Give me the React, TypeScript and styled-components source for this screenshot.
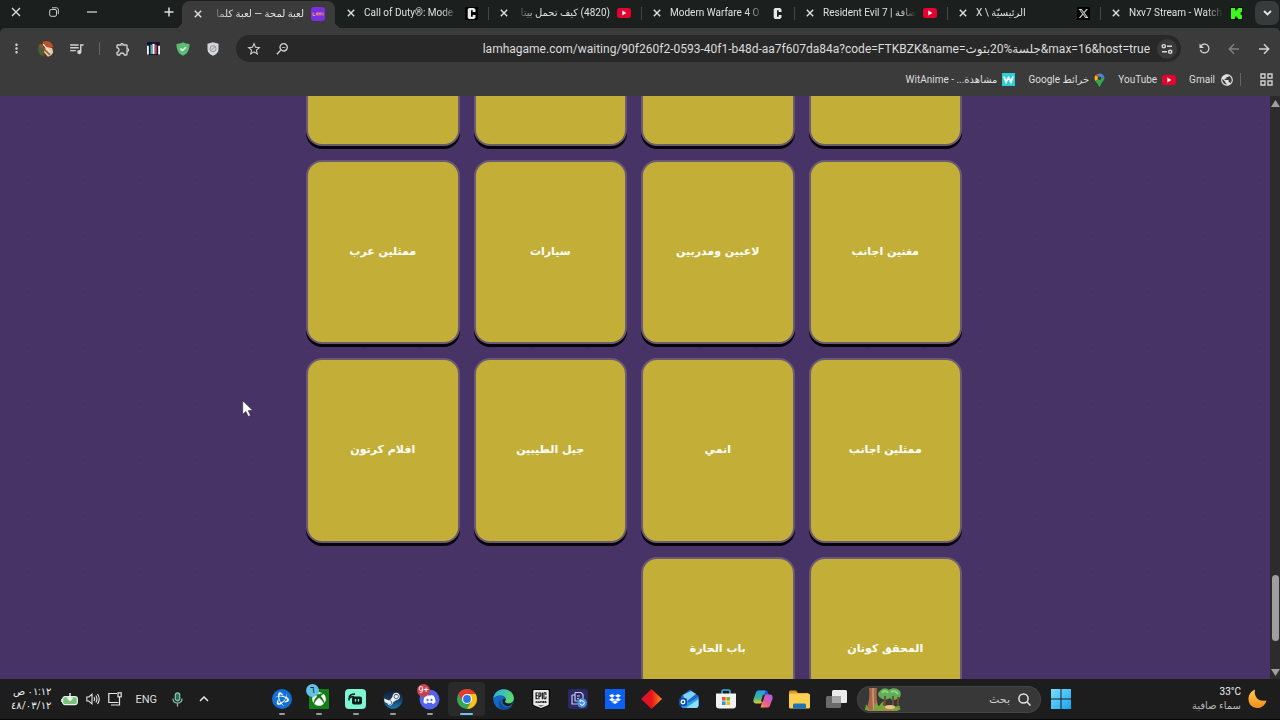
import React from 'react';
import styled, { createGlobalStyle } from 'styled-components';
import { MdStarBorder, MdRefresh, MdMoreVert, MdQueueMusic, MdZoomOut, MdPublic, MdOutlineExtension } from 'react-icons/md';
import { FaDropbox, FaDiscord, FaSteam, FaXbox } from 'react-icons/fa';
import { FaXTwitter } from 'react-icons/fa6';
import { SiBattledotnet, SiEpicgames } from 'react-icons/si';

const uiFont = 'Roboto, "DejaVu Sans", sans-serif';

const GlobalStyle = createGlobalStyle`
  * { box-sizing: border-box; }
  body { margin: 0; background: #1d1d1d; font-family: ${uiFont}; }
  button, input { font: inherit; color: inherit; }
  button { border: 0; padding: 0; background: none; cursor: default; }
  a { color: inherit; text-decoration: none; }
  svg { display: block; flex: none; }
`;

const Desktop = styled.div`
  position: relative;
  display: flex;
  flex-direction: column;
  height: 100vh;
  overflow: hidden;
  background: #1b201f;
  color: #dedede;
  font-size: 11px;
`;

/* ---------- tab strip ---------- */

const TabStrip = styled.header`
  display: flex;
  align-items: stretch;
  height: 28px;
  flex: none;
  background: #1b201f;
  padding: 0 1px 0 7px;
`;

const TabMenu = styled.button`
  display: grid;
  place-items: center;
  width: 24px;
  height: 24px;
  margin: 1px 0 0 2px;
  border-radius: 7px;
  background: #383b3b;
`;

const Tab = styled.div<{ $active?: boolean }>`
  position: relative;
  display: flex;
  align-items: center;
  gap: 7px;
  flex: 0 1 153px;
  min-width: 0;
  padding: 0 10px 2px;
  background: ${(p) => (p.$active ? '#3b3b3b' : 'transparent')};
  border-radius: 8px 8px 0 0;
  margin-top: ${(p) => (p.$active ? '1px' : '0')};

  &::before, &::after {
    content: '';
    position: absolute;
    bottom: 0;
    width: 7px;
    height: 7px;
    display: ${(p) => (p.$active ? 'block' : 'none')};
  }
  &::before { right: -7px; background: radial-gradient(circle at 100% 0, transparent 7px, #3b3b3b 7px); }
  &::after { left: -7px; background: radial-gradient(circle at 0 0, transparent 7px, #3b3b3b 7px); }
`;

const TabDivider = styled.span`
  align-self: center;
  width: 1px;
  height: 13px;
  margin: 0 -1px 2px 0;
  background: #454848;
`;

const TabTitle = styled.span`
  flex: 1;
  min-width: 0;
  overflow: hidden;
  white-space: nowrap;
  line-height: 18px;
  font-size: 10px;
  color: #dfe1e1;
  mask-image: linear-gradient(to right, #000 82%, transparent);
  &[dir='rtl'] { mask-image: linear-gradient(to left, #000 82%, transparent); }
`;

const TabClose = styled.button`
  display: grid;
  place-items: center;
  width: 12px;
  height: 12px;
`;

const WindowControls = styled.div`
  display: flex;
  align-items: center;
  margin-inline-start: auto;
  padding-bottom: 4px;
`;

const WindowButton = styled.button`
  display: grid;
  place-items: center;
  width: 38px;
  height: 24px;
  &:last-child { width: 18px; margin-inline-start: 10px; }
`;

const NewTab = styled.button`
  display: grid;
  place-items: center;
  width: 24px;
  height: 24px;
  margin-inline-start: 1px;
`;

/* ---------- toolbar ---------- */

const Toolbar = styled.div`
  display: flex;
  align-items: center;
  height: 37px;
  flex: none;
  padding: 4px 1px 0;
  border-radius: 5px 5px 0 0;
  background: #3b3b3b;
`;

const ToolButton = styled.button<{ $dim?: boolean }>`
  display: grid;
  place-items: center;
  width: 30px;
  height: 26px;
  color: ${(p) => (p.$dim ? '#808080' : '#d2d2d2')};
`;

const AddressBar = styled.div`
  display: flex;
  align-items: center;
  flex: 1;
  min-width: 0;
  height: 27px;
  margin: 0 8px;
  padding: 0 4px;
  border-radius: 14px;
  background: #282828;
`;

const SiteInfo = styled.button`
  display: grid;
  place-items: center;
  width: 20px;
  height: 20px;
  border-radius: 50%;
  background: #3a3a3a;
`;

const Address = styled.input`
  flex: 1;
  min-width: 0;
  margin: 0 5px;
  border: 0;
  outline: 0;
  background: transparent;
  color: #dcdcdc;
  font-size: 12px;
  text-align: right;
`;

const BarButton = styled.button`
  display: grid;
  place-items: center;
  width: 28px;
  height: 20px;
  color: #d2d2d2;
`;

const Divider = styled.span<{ $wide?: boolean }>`
  width: 1px;
  height: 13px;
  margin: ${(p) => (p.$wide ? '0 19px 0 6px' : '0 8px')};
  background: #666;
`;

const Bookmarks = styled.nav`
  display: flex;
  align-items: center;
  height: 31px;
  flex: none;
  padding: 0 7px 2px;
  background: #3b3b3b;
`;

const Bookmark = styled.a`
  display: flex;
  align-items: center;
  gap: 5px;
  margin-inline-end: 13px;
  font-size: 10px;
  line-height: 18px;
  white-space: nowrap;
`;

/* ---------- page ---------- */

const Viewport = styled.div`
  display: flex;
  flex: 1;
  min-height: 0;
`;

const Page = styled.main`
  flex: 1;
  min-width: 0;
  overflow: hidden;
  padding: 0 16px 0 14px;
  background: radial-gradient(circle, #432e5f 1px, transparent 1px) 0 0 / 56px 56px, #483366;
`;

const CategoryGrid = styled.div`
  display: grid;
  grid-template-columns: repeat(4, 1fr);
  gap: 14px;
  max-width: 656px;
  margin: -134px auto 0;
`;

const Category = styled.button`
  aspect-ratio: 5 / 6;
  border: 2px solid #6c5a75;
  border-radius: 16px;
  background: #c3af37;
  box-shadow: 0 3px 0 #050208;
  color: #fff;
  font-family: "DejaVu Sans", sans-serif;
  font-weight: 700;
  font-size: 11px;
  line-height: 18px;
`;

const Scrollbar = styled.div`
  display: flex;
  flex-direction: column;
  align-items: center;
  width: 10px;
  padding: 4px 0 3px 1px;
  background: #2c2c2c;
`;

const Thumb = styled.div`
  width: 7px;
  height: 66px;
  margin: auto 0 28px;
  border-radius: 4px;
  background: #9f9f9f;
`;

const Pointer = styled.svg`
  position: absolute;
  left: 242px;
  top: 400px;
`;

/* ---------- taskbar ---------- */

const Taskbar = styled.footer`
  display: flex;
  align-items: center;
  height: 41px;
  flex: none;
  padding: 0 13px 0 11px;
  background: #1d1d1d;
  border-bottom: 1px solid #080808;
`;

const Weather = styled.button`
  display: flex;
  align-items: center;
  gap: 7px;
  width: 190px;
  text-align: right;
  line-height: 14px;
`;

const WeatherText = styled.span`
  display: grid;
  font-size: 10px;
  color: #b8b8b8;
  & > b { font-weight: 400; color: #f2f2f2; }
`;

const StartButton = styled.button`
  display: grid;
  place-items: center;
  width: 32px;
  height: 32px;
`;

const Search = styled.label`
  display: flex;
  align-items: center;
  gap: 8px;
  width: 184px;
  height: 27px;
  margin-inline: 4px 2px;
  padding: 0 10px 0 8px;
  border-radius: 14px;
  background: #383838;
  box-shadow: inset 0 0 0 1px #434343;
`;

const SearchInput = styled.input`
  flex: 1;
  min-width: 0;
  padding: 0;
  border: 0;
  outline: 0;
  background: transparent;
  font-size: 11px;
  &::placeholder { color: #cfcfcf; opacity: 1; }
`;

const Apps = styled.div`
  display: flex;
`;

const AppButton = styled.button<{ $state?: 'open' | 'focus' }>`
  position: relative;
  display: grid;
  place-items: center;
  width: 37px;
  height: 34px;
  border-radius: 4px;
  background: ${(p) => (p.$state === 'focus' ? '#2a2a2a' : 'transparent')};
  &::after {
    content: '';
    position: absolute;
    bottom: 1px;
    width: ${(p) => (p.$state === 'focus' ? 13 : 6)}px;
    height: 2px;
    border-radius: 2px;
    background: ${(p) => (p.$state === 'focus' ? '#6cc5e4' : '#9a9a9a')};
    display: ${(p) => (p.$state ? 'block' : 'none')};
  }
`;

const Badge = styled.span<{ $red?: boolean }>`
  position: absolute;
  top: 2px;
  left: 6px;
  min-width: 13px;
  height: 13px;
  border-radius: 7px;
  background: ${(p) => (p.$red ? '#c8414b' : '#62c3e6')};
  color: ${(p) => (p.$red ? '#fff' : '#123')};
  font-size: 9px;
  line-height: 13px;
  text-align: center;
`;

const Tray = styled.div`
  display: flex;
  align-items: center;
  gap: 8px;
  margin-inline-start: auto;
`;

const TrayButton = styled.button<{ $wide?: boolean }>`
  display: grid;
  place-items: center;
  min-width: 14px;
  height: 28px;
  margin-inline: ${(p) => (p.$wide ? 5 : 0)}px;
  font-size: 11px;
`;

const Clock = styled.time`
  display: grid;
  margin-inline-start: 2px;
  text-align: right;
  font-size: 10px;
  line-height: 14px;
  color: #efefef;
`;

/* ---------- drawings ---------- */

const Cross = ({ size = 8, width = 1.4 }: { size?: number; width?: number }) => (
  <svg width={size} height={size} viewBox="0 0 8 8" fill="none" stroke="#e0e0e0" strokeWidth={width}><path d="M.8.8l6.4 6.4M7.2.8L.8 7.2" /></svg>
);

const YouTubeLogo = () => (
  <svg width="14" height="14" viewBox="0 0 14 14"><rect y="2" width="14" height="10" rx="2.5" fill="#e5002f" /><path d="M5.3 4.6v4.8L9.4 7z" fill="#fff" /></svg>
);

const CLogo = ({ boxed }: { boxed?: boolean }) => (
  <svg width="13" height="13" viewBox="0 0 13 13">
    {boxed && <rect width="13" height="13" fill="#050505" />}
    <path d="M4 1h5l1.500 1.500V5H7.700V3.300H6v6.400h1.700V8h2.800v2.500L9 12H4L2.700 10.700V2.300z" fill="#e8e8e8" />
  </svg>
);

const KickLogo = () => (
  <svg width="13" height="13" viewBox="0 0 13 13"><rect width="13" height="13" fill="#0a1508" /><path d="M1 1h4v2.500h1.500V2.300H8V1h4v4h-1.300v1.500H9.500h1.200V8H12v4H8v-1.300H6.500V9.500H5V12H1z" fill="#3df61d" /></svg>
);

const LamhaLogo = () => (
  <svg width="14" height="14" viewBox="0 0 14 14"><rect width="14" height="14" rx="3" fill="#7a2fe0" /><path d="M2 8.500V5.500M2 8.500h2M5 8.500l1-3 1 3M8 8.500v-3l1 1.500 1-1.500v3M12 5.500v3" stroke="#f09a70" fill="none" /></svg>
);

const XLogo = () => (
  <svg width="13" height="13" viewBox="0 0 13 13"><rect width="13" height="13" fill="#000" /><FaXTwitter x="1" y="1" size={11} color="#ddd" /></svg>
);

const Tune = () => (
  <svg width="12" height="12" viewBox="0 0 12 12" fill="none" stroke="#dcdcdc" strokeWidth="1.400"><circle cx="2.800" cy="3.200" r="1.600" /><path d="M6 3.200h5M1 8.800h5" /><circle cx="9.200" cy="8.800" r="1.600" /></svg>
);

const Arrow = ({ back }: { back?: boolean }) => (
  <svg width="12" height="12" viewBox="0 0 12 12" fill="none" stroke="currentColor" strokeWidth="1.500"><path d={back ? 'M11 6H1.500M6 1.200L1.300 6 6 10.800' : 'M1 6h9.500M6 1.200L10.700 6 6 10.800'} /></svg>
);

const GreenShield = () => (
  <svg width="14" height="14" viewBox="0 0 14 14"><path d="M7 .3c2 1.200 4 1.700 6.500 1.700 0 5.500-1.500 9.300-6.500 11.700C2 11.300.5 7.500.5 2 3 2 5 1.500 7 .3z" fill="#5cbd74" /><path d="M4.500 6.500l2 2 3.300-3.300" fill="none" stroke="#fff" strokeWidth="1.300" /></svg>
);

const GreyShield = () => (
  <svg width="12" height="14" viewBox="0 0 12 14"><path d="M6 .3l5.500 1.500v5.700c0 3-2.500 5-5.500 6.200C3 12.500.5 10.500.5 7.500V1.800z" fill="#d3d7da" /><circle cx="6" cy="6.700" r="3" fill="none" stroke="#8c9296" /><path d="M4.300 8.300l3.400-3.400" stroke="#8c9296" /></svg>
);

const StripedLogo = () => (
  <svg width="13" height="13" viewBox="0 0 14 14"><rect width="14" height="14" rx="1.500" fill="#11142a" /><path d="M1 4v9.500M13 4v9.500" stroke="#f2f2f2" strokeWidth="2" /><path d="M4.500 3v10" stroke="#39c5c8" strokeWidth="1.600" /><path d="M7 2v11" stroke="#f4f4f4" strokeWidth="2.400" /><path d="M9.600 3v10" stroke="#e0455a" strokeWidth="1.600" /></svg>
);

const Avatar = () => (
  <svg width="16" height="16" viewBox="0 0 16 16"><clipPath id="face"><circle cx="8" cy="8" r="8" /></clipPath><g clipPath="url(#face)"><rect width="16" height="16" fill="#6b3421" /><path d="M0 2l5 2 3 8-5 4H0z" fill="#476034" /><path d="M4 0h9l2 6-5 1-4-4z" fill="#b9522b" /><path d="M8 6l6 1 2 7-6 2-4-5z" fill="#d9cfae" /><path d="M2 4l10 10" stroke="#b5472c" strokeWidth="1.600" /><path d="M5 3l7 8" stroke="#f0e6cd" strokeWidth="1.300" /></g></svg>
);

const MapsPin = () => (
  <svg width="11" height="14" viewBox="0 0 11 14"><path d="M5.500.5A5 5 0 0 0 1.600 2.300L5.500 5.500z" fill="#ea4335" /><path d="M5.500.5a5 5 0 0 1 4.800 3.600L5.500 5.500 4 2z" fill="#4285f4" /><path d="M1.600 2.300C.2 4 .3 6 1.300 8L5.500 5.500z" fill="#fbbc04" /><path d="M10.300 4.100c.7 3.400-3 5-4.100 9.100-.3.700-1 .7-1.300 0C4.300 11 2.300 9.700 1.300 8l4.200-2.500z" fill="#34a853" /><circle cx="5.500" cy="5.300" r="1.700" fill="#3b3b3b" /></svg>
);

const WitLogo = () => (
  <svg width="13" height="13" viewBox="0 0 13 13"><rect width="13" height="13" fill="#2ccfd3" /><path d="M2 3.500l2 5.500 2.500-4.500L9 9l2-5.500" fill="none" stroke="#fff" strokeWidth="1.800" /></svg>
);

const GridIcon = () => (
  <svg width="13" height="13" viewBox="0 0 13 13" fill="none" stroke="#d0d0d0" strokeWidth="1.400"><path d="M1 1h4v4H1zM8 1h4v4H8zM1 8h4v4H1zM8 8h4v4H8z" /></svg>
);

const Moon = () => (
  <svg width="19" height="20" viewBox="0 0 19 20"><defs><linearGradient id="moon" x1="0" y1="0" x2="0" y2="1"><stop offset="0" stopColor="#ffcc4d" /><stop offset="1" stopColor="#f08c1c" /></linearGradient></defs><path d="M7 .5C5.500 7 10 13.500 18.500 11.500 17 16.500 13 19.500 8.500 19 3.500 18.400.2 14.500.5 9.500.7 5.500 3.300 2 7 .5z" fill="url(#moon)" /></svg>
);

const Windows = () => (
  <svg width="20" height="20" viewBox="0 0 20 20"><defs><linearGradient id="win" x1="0" y1="0" x2="1" y2="1"><stop offset="0" stopColor="#7edcff" /><stop offset="1" stopColor="#16a4f0" /></linearGradient></defs><path d="M0 0h9.500v9.500H0zM10.500 0H20v9.500h-9.500zM0 10.500h9.500V20H0zM10.500 10.500H20V20h-9.500z" fill="url(#win)" /></svg>
);

const Forest = () => (
  <svg width="36" height="23" viewBox="0 0 36 23">
    <path d="M0 21c6-4 28-5 36 0l-4 2H3z" fill="#a58a4a" />
    <path d="M15 3c3-4 7-3 9-1 3-3 9-2 11 1 2 4 0 8-3 8-3 2-6 1-7-1-3 2-7 2-9 0-3-1-4-5-1-7z" fill="#5fae5a" />
    <path d="M17 5c2-3 5-2 6 0M26 4c3-2 6 0 7 2" stroke="#93d47c" strokeWidth="2" fill="none" />
    <path d="M20 8v10M28 8v10M33 9v9" stroke="#7c4a2b" strokeWidth="1.800" />
    <path d="M4 0h8c-1 8 0 15 2 22H1C4 15 5 8 4 0z" fill="#a8684a" />
    <path d="M8 0c0 8 0 15 1 22" stroke="#d09a78" strokeWidth="1.500" fill="none" />
    <path d="M9 22c0-4 1-6 3-8 0 3 1 4 2 5 1-3 3-5 5-6-1 3-1 5 0 8zM0 22l1-6 3 6zM26 22c1-3 5-4 9-4l-1 4z" fill="#6aae35" />
    <ellipse cx="25" cy="19" rx="5" ry="2" fill="#e6c58b" />
  </svg>
);

const TaskView = () => (
  <svg width="21" height="20" viewBox="0 0 21 20"><rect x="6" y="1" width="15" height="13" rx="1.500" fill="#ececec" /><rect y="7" width="15" height="12" rx="1.500" fill="#6a6a6a" /><path d="M6 7h9v7H6z" fill="#a5a5a5" /></svg>
);

const Folder = () => (
  <svg width="21" height="19" viewBox="0 0 21 19"><path d="M0 2Q0 .5 1.500.5H7l2 2.500h10v6H0z" fill="#d99a20" /><rect y="3.500" width="21" height="15" rx="1.500" fill="#fbd050" /><path d="M4 18.500V15q0-1.500 1.500-1.500h10Q17 13.500 17 15v3.500z" fill="#1e74b8" /></svg>
);

const Copilot = () => (
  <svg width="20" height="18" viewBox="0 0 20 18"><defs><linearGradient id="cpA" x1="0" y1="0" x2="0" y2="1"><stop offset="0" stopColor="#1f9df0" /><stop offset=".6" stopColor="#43b98a" /><stop offset="1" stopColor="#e9cb35" /></linearGradient><linearGradient id="cpB" x1="1" y1="0" x2="0" y2="1"><stop offset="0" stopColor="#a65ff0" /><stop offset=".6" stopColor="#ee5a93" /><stop offset="1" stopColor="#f59a4a" /></linearGradient></defs><path d="M5 .5h8.500q1 0 1.500 2l.8 2.500H12z" fill="#2556c8" /><path d="M5 .5h7.500L9 12q-.5 1.500-2 1.500H3C.5 13.500 0 11 .6 9L3 2.500Q3.600.5 5 .5z" fill="url(#cpA)" /><path d="M15 17.500H7.500L11 6q.5-1.500 2-1.500h4c2.500 0 3 2.500 2.400 4.500L17 15.500q-.6 2-2 2z" fill="url(#cpB)" /><path d="M10.800 5L9 11.500" stroke="#1d1d1d" strokeWidth="1.800" /></svg>
);

const Store = () => (
  <svg width="20" height="20" viewBox="0 0 20 20"><path d="M6 5V2.500Q6 1 7.500 1h5Q14 1 14 2.500V5" fill="none" stroke="#3cb1dd" strokeWidth="1.600" /><path d="M0 4.500h20v12q0 3-3 3H3q-3 0-3-3z" fill="#f3f3f3" /><path d="M6 8h3.600v3.600H6z" fill="#f05325" /><path d="M10.400 8H14v3.600h-3.600z" fill="#7fba22" /><path d="M6 12.400h3.600V16H6z" fill="#19a2e6" /><path d="M10.400 12.400H14V16h-3.600z" fill="#fdb813" /></svg>
);

const Outlook = () => (
  <svg width="20" height="20" viewBox="0 0 20 20"><path d="M2 7l9-6.500L19.500 7v9q0 3-3 3H5q-3 0-3-3z" fill="#1a66c9" /><path d="M4 6l8-4 5 3-10 8z" fill="#7fd4f7" /><path d="M2 9l8 4.500 9.500-6V16q0 3-3 3H5q-3 0-3-3z" fill="#2f9be8" /><path d="M7 18.800l12.500-8.500V16q0 3-3 3z" fill="#8be0fa" /><rect y="9" width="8" height="8" rx="2" fill="#0f4fae" /><circle cx="4" cy="13" r="1.800" fill="none" stroke="#fff" strokeWidth="1.300" /></svg>
);

const Diamond = () => (
  <svg width="21" height="20" viewBox="0 0 21 20"><defs><linearGradient id="dia"><stop offset="0" stopColor="#d80f3c" /><stop offset=".5" stopColor="#e8141a" /><stop offset="1" stopColor="#ff8b1c" /></linearGradient></defs><path d="M10.500 0L21 10 10.500 20 0 10z" fill="url(#dia)" /></svg>
);

const DropboxTile = () => (
  <svg width="20" height="20" viewBox="0 0 20 20"><rect width="20" height="20" fill="#0d61f2" /><FaDropbox x="4" y="4" size={12} color="#fff" /></svg>
);

const NotesTile = () => (
  <svg width="20" height="20" viewBox="0 0 20 20"><rect width="20" height="20" rx="3" fill="#2b2864" /><path d="M4 6h3M4 6v9h6M7 3.500h6l2 2V10M7 3.500V12h3M9 7h3M9 9.500h2" fill="none" stroke="#c6c8ee" strokeWidth="1.200" /><circle cx="14" cy="14" r="4.800" fill="#4592dc" /><path d="M12 14.500a2.200 2.200 0 1 0 2-2.700h-2M13 10.500l-1.300 1.300L13 13" fill="none" stroke="#fff" /></svg>
);

const EpicTile = () => (
  <svg width="18" height="20" viewBox="0 0 18 20"><path d="M0 1.500Q0 0 1.500 0h15Q18 0 18 1.500V16.500L9 20 0 16.500z" fill="#050505" /><SiEpicgames x="0" y="1" size={18} color="#e8e8e8" /></svg>
);

const Edge = () => (
  <svg width="21" height="21" viewBox="0 0 21 21"><defs><linearGradient id="edA" x1="0" y1="0" x2="1" y2=".5"><stop offset="0" stopColor="#2aa9e8" /><stop offset="1" stopColor="#5bdc6a" /></linearGradient></defs><circle cx="10.500" cy="10.500" r="10.300" fill="#1667c0" /><path d="M.3 9.500C1 4 5.300.2 10.500.2c6 0 10.300 4.300 10.300 9 0 3.300-2.500 5.300-5.500 5.300-2.300 0-3.600-1-3.300-2 .8-1.200 1-2 .8-3C12.200 6.800 9.500 6 7 6.200 4 6.500 1.500 7.500.3 9.500z" fill="url(#edA)" /><path d="M8 10c-1.500 4 1 8.500 6 8.500 2 0 3.500-.5 5-1.500-2 3-6 4.300-9.500 3.600C5 19.500 4.500 13.500 8 10z" fill="#0f4a94" /><path d="M12.700 9.500c.2 1-.7 2-.7 3 0 1.200 1.500 2 3.300 2 2 0 3.700-.7 4.800-2.300-.5 3-2.800 5-5.600 5C10.500 17 8.500 13 10 10z" fill="#1d1d1d" /></svg>
);

const Chrome = () => (
  <svg width="20" height="20" viewBox="0 0 20 20"><circle cx="10" cy="10" r="10" fill="#34a853" /><path d="M1.340 5A10 10 0 0 1 18.660 5H10L5.670 12.500z" fill="#e33b2e" /><path d="M18.660 5A10 10 0 0 1 10 20l4.330-7.500L10 5z" fill="#fbc116" /><circle cx="10" cy="10" r="5" fill="#fff" /><circle cx="10" cy="10" r="3.900" fill="#2a74e6" /></svg>
);

const DiscordTile = () => (
  <svg width="21" height="21" viewBox="0 0 21 21"><circle cx="10.500" cy="10.500" r="10" fill="#5562ea" /><FaDiscord x="4" y="4" size={13} color="#fff" /></svg>
);

const SteamTile = () => (
  <svg width="20" height="20" viewBox="0 0 20 20"><defs><linearGradient id="stm" x1="0" y1="0" x2="0" y2="1"><stop offset="0" stopColor="#141a26" /><stop offset=".5" stopColor="#153a63" /><stop offset="1" stopColor="#1a78b4" /></linearGradient></defs><circle cx="10" cy="10" r="9" fill="#eee" /><FaSteam size={20} fill="url(#stm)" /></svg>
);

const StreamTile = () => (
  <svg width="21" height="20" viewBox="0 0 21 20"><rect width="21" height="20" rx="4" fill="#80f5d2" /><path d="M4 8.500Q5 5 10 5M4 11.500V9.500Q6 7.500 9 7.500" fill="none" stroke="#0b1d19" strokeWidth="1.500" /><rect x="7" y="7.500" width="10" height="8" rx="2" fill="#0b1d19" /><path d="M10.500 10v2.500M13.500 10v2.500" stroke="#80f5d2" strokeWidth="1.300" /></svg>
);

const XboxTile = () => (
  <svg width="20" height="20" viewBox="0 0 20 20"><rect width="20" height="20" rx="1" fill="#128012" /><FaXbox x="3" y="3" size={14} color="#fff" /></svg>
);

const BattleTile = () => (
  <svg width="20" height="20" viewBox="0 0 20 20"><circle cx="10" cy="10" r="10" fill="#1270d8" /><SiBattledotnet x="3" y="3" size={14} color="#fff" /></svg>
);

const Mic = () => (
  <svg width="11" height="15" viewBox="0 0 11 15" fill="none" stroke="#86cbb8" strokeWidth="1.200"><rect x="3.300" y=".8" width="4.400" height="8" rx="2.200" fill="#2f6a5d" /><path d="M1 6.500c0 6 9 6 9 0M5.500 11v3.500" /></svg>
);

const Monitor = () => (
  <svg width="14" height="14" viewBox="0 0 14 14" fill="none" stroke="#e6e6e6" strokeWidth="1.200"><path d="M9 1.500H.8v9h9.500M3 13h8.500V5" /><rect x="10" y=".8" width="3.200" height="4" /></svg>
);

const Speaker = () => (
  <svg width="14" height="12" viewBox="0 0 14 12" fill="none" stroke="#e6e6e6" strokeWidth="1.100"><path d="M.8 4v4h2L6 10.800V1.200L2.800 4zM8 4q1.300 2 0 4M9.800 2.500q2.400 3.500 0 7M11.500 1q3.500 5 0 10" /></svg>
);

const Battery = () => (
  <svg width="17" height="13" viewBox="0 0 17 13"><rect x="1.600" y="3.600" width="14.800" height="8" rx="2.500" fill="#79c37f" stroke="#e4efe4" strokeWidth="1.200" /><path d="M.6 6v3" stroke="#e4efe4" /><path d="M9 0v6M6.500 4.500L9 7.500l2.500-3" fill="none" stroke="#fff" strokeWidth="1.300" /></svg>
);

/* ---------- data ---------- */

type TabInfo = { title: string; dir: 'ltr' | 'rtl'; icon: React.ReactNode; active?: boolean };

const tabs: TabInfo[] = [
  { title: 'Nxv7 Stream - Watch', dir: 'ltr', icon: <KickLogo /> },
  { title: 'X \\ الرئيسيّة', dir: 'ltr', icon: <XLogo /> },
  { title: 'Resident Evil 7 | ضافة', dir: 'ltr', icon: <YouTubeLogo /> },
  { title: 'Modern Warfare 4 O', dir: 'ltr', icon: <CLogo /> },
  { title: '(4820) كيف تحمل بيتا', dir: 'rtl', icon: <YouTubeLogo /> },
  { title: 'Call of Duty®: Mode', dir: 'ltr', icon: <CLogo boxed /> },
  { title: 'لعبة لمحة — لعبة كلما', dir: 'rtl', icon: <LamhaLogo />, active: true },
];

const categories = [
  '', '', '', '',
  'مغنين اجانب', 'لاعبين ومدربين', 'سيارات', 'ممثلين عرب',
  'ممثلين اجانب', 'انمي', 'جيل الطيبين', 'افلام كرتون',
  'المحقق كونان', 'باب الحارة',
];

type AppInfo = { icon: React.ReactNode; state?: 'open' | 'focus'; badge?: string; red?: boolean };

const apps: AppInfo[] = [
  { icon: <TaskView /> },
  { icon: <Folder /> },
  { icon: <Copilot /> },
  { icon: <Store /> },
  { icon: <Outlook /> },
  { icon: <Diamond /> },
  { icon: <DropboxTile /> },
  { icon: <NotesTile /> },
  { icon: <EpicTile /> },
  { icon: <Edge /> },
  { icon: <Chrome />, state: 'focus' },
  { icon: <DiscordTile />, state: 'open', badge: '9+', red: true },
  { icon: <SteamTile />, state: 'open' },
  { icon: <StreamTile />, state: 'open' },
  { icon: <XboxTile />, state: 'open', badge: '٦' },
  { icon: <BattleTile />, state: 'open' },
];

export default function App() {
  return (
    <Desktop dir="rtl">
      <GlobalStyle />

      <TabStrip>
        <TabMenu>
          <svg width="9" height="6" viewBox="0 0 9 6" fill="none" stroke="#e4e4e4" strokeWidth="1.800"><path d="M1 1l3.500 3.500L8 1" /></svg>
        </TabMenu>
        {tabs.map((t, i) => (
          <React.Fragment key={t.title}>
            {i > 0 && !t.active && <TabDivider />}
            <Tab $active={t.active}>
              {t.icon}
              <TabTitle dir={t.dir}>{t.title}</TabTitle>
              <TabClose><Cross /></TabClose>
            </Tab>
          </React.Fragment>
        ))}
        <NewTab>
          <svg width="10" height="10" viewBox="0 0 10 10" stroke="#e0e0e0" strokeWidth="1.500"><path d="M5 .5v9M.5 5h9" /></svg>
        </NewTab>
        <WindowControls>
          <WindowButton><svg width="10" height="2" viewBox="0 0 10 2"><path d="M0 1h10" stroke="#ddd" strokeWidth="1.200" /></svg></WindowButton>
          <WindowButton><svg width="10" height="10" viewBox="0 0 10 10" fill="none" stroke="#ccc"><rect x=".7" y="2.500" width="6.800" height="6.800" rx="1.500" /><path d="M3 .8h4.500q1.800 0 1.800 1.800V7" /></svg></WindowButton>
          <WindowButton><Cross size={10} width={1} /></WindowButton>
        </WindowControls>
      </TabStrip>

      <Toolbar>
        <ToolButton><Arrow /></ToolButton>
        <ToolButton $dim><Arrow back /></ToolButton>
        <ToolButton><MdRefresh size={15} transform="scale(-1 1)" /></ToolButton>
        <AddressBar>
          <SiteInfo><Tune /></SiteInfo>
          <Address dir="ltr" readOnly value="lamhagame.com/waiting/90f260f2-0593-40f1-b48d-aa7f607da84a?code=FTKBZK&name=جلسة%20بثوث&max=16&host=true" />
          <BarButton><MdZoomOut size={16} transform="scale(-1 1)" /></BarButton>
          <BarButton><MdStarBorder size={16} /></BarButton>
        </AddressBar>
        <ToolButton><GreyShield /></ToolButton>
        <ToolButton><GreenShield /></ToolButton>
        <ToolButton><StripedLogo /></ToolButton>
        <ToolButton><MdOutlineExtension size={16} /></ToolButton>
        <Divider />
        <ToolButton><MdQueueMusic size={17} /></ToolButton>
        <ToolButton><Avatar /></ToolButton>
        <ToolButton><MdMoreVert size={15} /></ToolButton>
      </Toolbar>

      <Bookmarks>
        <GridIcon />
        <Divider $wide />
        <Bookmark href="#"><MdPublic size={14} />Gmail</Bookmark>
        <Bookmark href="#"><YouTubeLogo />YouTube</Bookmark>
        <Bookmark href="#"><MapsPin />خرائط Google</Bookmark>
        <Bookmark href="#"><WitLogo />مشاهدة... - WitAnime</Bookmark>
      </Bookmarks>

      <Viewport>
        <Scrollbar>
          <svg width="9" height="7" viewBox="0 0 9 7"><path d="M4.500 0L9 7H0z" fill="#9f9f9f" /></svg>
          <Thumb />
          <svg width="9" height="7" viewBox="0 0 9 7"><path d="M4.500 7L9 0H0z" fill="#9f9f9f" /></svg>
        </Scrollbar>
        <Page>
          <CategoryGrid>
            {categories.map((c, i) => <Category key={i}>{c}</Category>)}
          </CategoryGrid>
        </Page>
      </Viewport>

      <Taskbar>
        <Weather>
          <Moon />
          <WeatherText><b dir="ltr">33°C</b><span>سماء صافية</span></WeatherText>
        </Weather>
        <StartButton><Windows /></StartButton>
        <Search>
          <svg width="13" height="13" viewBox="0 0 13 13" fill="none" stroke="#e6e6e6" strokeWidth="1.500"><circle cx="5.500" cy="5.500" r="4.600" /><path d="M8.800 8.800l3.700 3.700" /></svg>
          <SearchInput placeholder="بحث" />
          <Forest />
        </Search>
        <Apps>
          {apps.map((a, i) => (
            <AppButton key={i} $state={a.state}>
              {a.icon}
              {a.badge && <Badge $red={a.red} dir="ltr">{a.badge}</Badge>}
            </AppButton>
          ))}
        </Apps>
        <Tray>
          <TrayButton $wide><svg width="10" height="6" viewBox="0 0 10 6" fill="none" stroke="#e6e6e6" strokeWidth="1.500"><path d="M1 5l4-4 4 4" /></svg></TrayButton>
          <TrayButton><Mic /></TrayButton>
          <TrayButton $wide>ENG</TrayButton>
          <TrayButton><Monitor /></TrayButton>
          <TrayButton><Speaker /></TrayButton>
          <TrayButton><Battery /></TrayButton>
          <Clock><span>٠١:١٢ ص</span><span>٤٨/٠٣/١٢</span></Clock>
        </Tray>
      </Taskbar>

      <Pointer width="12" height="18" viewBox="0 0 12 18"><path d="M.7.7v13.600l3.200-2.800 2.300 5 2.300-1.100-2.200-4.800h4.500z" fill="#fff" stroke="#2a2038" strokeWidth=".6" /></Pointer>
    </Desktop>
  );
}
